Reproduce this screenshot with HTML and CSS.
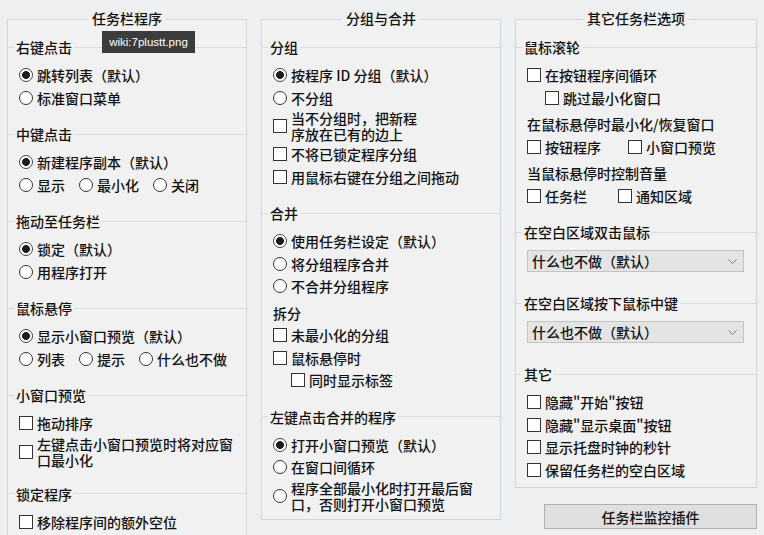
FILE: index.html
```html
<!DOCTYPE html>
<html lang="zh-CN">
<head>
<meta charset="utf-8">
<title>任务栏设置</title>
<link rel="stylesheet" href="styles.css">
</head>
<body>
<div class="page">

  <fieldset class="column">
    <legend class="column-title">任务栏程序</legend>

    <fieldset class="section">
      <legend>右键点击</legend>
      <label class="row"><span class="radio on"></span>跳转列表（默认）</label>
      <label class="row"><span class="radio"></span>标准窗口菜单</label>
    </fieldset>

    <fieldset class="section">
      <legend>中键点击</legend>
      <label class="row"><span class="radio on"></span>新建程序副本（默认）</label>
      <div class="row">
        <label class="opt"><span class="radio"></span>显示</label>
        <label class="opt"><span class="radio"></span>最小化</label>
        <label class="opt"><span class="radio"></span>关闭</label>
      </div>
    </fieldset>

    <fieldset class="section">
      <legend>拖动至任务栏</legend>
      <label class="row"><span class="radio on"></span>锁定（默认）</label>
      <label class="row"><span class="radio"></span>用程序打开</label>
    </fieldset>

    <fieldset class="section">
      <legend>鼠标悬停</legend>
      <label class="row"><span class="radio on"></span>显示小窗口预览（默认）</label>
      <div class="row">
        <label class="opt"><span class="radio"></span>列表</label>
        <label class="opt"><span class="radio"></span>提示</label>
        <label class="opt"><span class="radio"></span>什么也不做</label>
      </div>
    </fieldset>

    <fieldset class="section">
      <legend>小窗口预览</legend>
      <label class="row"><span class="check"></span>拖动排序</label>
      <label class="row"><span class="check"></span><span>左键点击小窗口预览时将对应窗<br>口最小化</span></label>
    </fieldset>

    <fieldset class="section">
      <legend>锁定程序</legend>
      <label class="row"><span class="check"></span>移除程序间的额外空位</label>
    </fieldset>
  </fieldset>

  <fieldset class="column">
    <legend class="column-title">分组与合并</legend>

    <fieldset class="section">
      <legend>分组</legend>
      <label class="row"><span class="radio on"></span>按程序 ID 分组（默认）</label>
      <label class="row"><span class="radio"></span>不分组</label>
      <label class="row"><span class="check"></span><span>当不分组时，把新程<br>序放在已有的边上</span></label>
      <label class="row"><span class="check"></span>不将已锁定程序分组</label>
      <label class="row"><span class="check"></span>用鼠标右键在分组之间拖动</label>
    </fieldset>

    <fieldset class="section">
      <legend>合并</legend>
      <label class="row"><span class="radio on"></span>使用任务栏设定（默认）</label>
      <label class="row"><span class="radio"></span>将分组程序合并</label>
      <label class="row"><span class="radio"></span>不合并分组程序</label>
      <div class="row sub">拆分</div>
      <label class="row"><span class="check"></span>未最小化的分组</label>
      <label class="row"><span class="check"></span>鼠标悬停时</label>
      <label class="row indent"><span class="check"></span>同时显示标签</label>
    </fieldset>

    <fieldset class="section">
      <legend>左键点击合并的程序</legend>
      <label class="row"><span class="radio on"></span>打开小窗口预览（默认）</label>
      <label class="row"><span class="radio"></span>在窗口间循环</label>
      <label class="row"><span class="radio"></span><span>程序全部最小化时打开最后窗<br>口，否则打开小窗口预览</span></label>
    </fieldset>
  </fieldset>

  <div class="side">
    <fieldset class="column">
      <legend class="column-title">其它任务栏选项</legend>

      <fieldset class="section">
        <legend>鼠标滚轮</legend>
        <label class="row"><span class="check"></span>在按钮程序间循环</label>
        <label class="row indent"><span class="check"></span>跳过最小化窗口</label>
        <div class="row sub">在鼠标悬停时最小化/恢复窗口</div>
        <div class="row">
          <label class="opt"><span class="check"></span>按钮程序</label>
          <label class="opt far"><span class="check"></span>小窗口预览</label>
        </div>
        <div class="row sub">当鼠标悬停时控制音量</div>
        <div class="row">
          <label class="opt"><span class="check"></span>任务栏</label>
          <label class="opt farther"><span class="check"></span>通知区域</label>
        </div>
      </fieldset>

      <fieldset class="section">
        <legend>在空白区域双击鼠标</legend>
        <div class="dropdown">
          <span>什么也不做（默认）</span>
          <svg class="chevron" width="9" height="5" viewBox="0 0 9 5"><path d="M0.5 0.5 L4.5 4.5 L8.5 0.5" fill="none" stroke="#7a7a7a" stroke-width="1"/></svg>
        </div>
      </fieldset>

      <fieldset class="section">
        <legend>在空白区域按下鼠标中键</legend>
        <div class="dropdown">
          <span>什么也不做（默认）</span>
          <svg class="chevron" width="9" height="5" viewBox="0 0 9 5"><path d="M0.5 0.5 L4.5 4.5 L8.5 0.5" fill="none" stroke="#7a7a7a" stroke-width="1"/></svg>
        </div>
      </fieldset>

      <fieldset class="section">
        <legend>其它</legend>
        <label class="row"><span class="check"></span>隐藏"开始"按钮</label>
        <label class="row"><span class="check"></span>隐藏"显示桌面"按钮</label>
        <label class="row"><span class="check"></span>显示托盘时钟的秒针</label>
        <label class="row"><span class="check"></span>保留任务栏的空白区域</label>
      </fieldset>
    </fieldset>

    <button class="plugin-btn" type="button">任务栏监控插件</button>
  </div>

  <div class="tip">wiki:7plustt.png</div>
</div>
</body>
</html>
```

FILE: styles.css
```css
* {
  box-sizing: border-box;
}

html,
body {
  margin: 0;
}

body {
  width: 764px;
  height: 535px;
  overflow: hidden;
  background: #eeeff0;
  font-family: "Noto Sans CJK SC", "Noto Sans", sans-serif;
  font-size: 14px;
  font-weight: 500;
  color: #111;
}

/* three group boxes side by side */
.page {
  position: relative;
  display: grid;
  grid-template-columns: 240px 240px 242px;
  column-gap: 14px;
  align-items: start;
  padding: 9px 0 0 7px;
}

.column {
  margin: 0;
  padding: 7px 0 6px;
  border: 1px solid #d4d5d6;
  min-inline-size: 0;
  background: #f1f1f2;
}

.column-title {
  margin: 0 auto;
  padding: 0 4px 3px;
  line-height: 18px;
}

/* titled sub-groups: a rule across the top with the title sitting on it */
.section {
  margin: 0;
  padding: 7px 12px 0 11px;
  border: 0;
  border-top: 1px solid #dcdddf;
  min-inline-size: 0;
}

.section + .section {
  margin-top: 15px;
}

.section > legend {
  margin-left: -5px;
  padding: 0 2px;
  line-height: 20px;
}

.row {
  display: flex;
  align-items: center;
  min-height: 22.5px;
  padding: 1px 0;
  line-height: 16px;
}

.sub {
  margin-top: 4px;
}

.indent {
  padding-left: 18px;
}

.opt {
  display: flex;
  align-items: center;
}

.opt + .opt {
  margin-left: 14px;
}

.opt.far {
  margin-left: 27px;
}

.opt.farther {
  margin-left: 31px;
}

.radio,
.check {
  flex: none;
  width: 14px;
  height: 14px;
  margin-right: 4px;
  border: 1px solid #333;
  background: #fff;
}

.radio {
  border-radius: 50%;
}

.radio.on {
  border-color: #444;
  background: radial-gradient(circle, #1c1c1c 0 3.6px, #fff 4.2px);
}

/* combo boxes */
.dropdown {
  display: flex;
  align-items: center;
  justify-content: space-between;
  height: 22px;
  margin: 1px 0 6px;
  padding: 0 6px 0 4px;
  border: 1px solid #c4c4c4;
  background: #e4e4e5;
  line-height: 20px;
}

.chevron {
  display: block;
}

.side {
  display: flex;
  flex-direction: column;
}

.plugin-btn {
  align-self: flex-end;
  width: 213px;
  height: 25px;
  margin-top: 16px;
  padding: 0;
  border: 1px solid #b0b0b0;
  background: #dfdfe0;
  font: inherit;
  color: inherit;
  line-height: 22px;
}

/* hover tooltip over the first box */
.tip {
  position: absolute;
  left: 102px;
  top: 31px;
  width: 93px;
  height: 22px;
  background: #3c3c3c;
  color: #fff;
  font-family: "Liberation Sans", Arial, sans-serif;
  font-size: 11.5px;
  font-weight: 400;
  line-height: 22px;
  text-align: center;
}
```
